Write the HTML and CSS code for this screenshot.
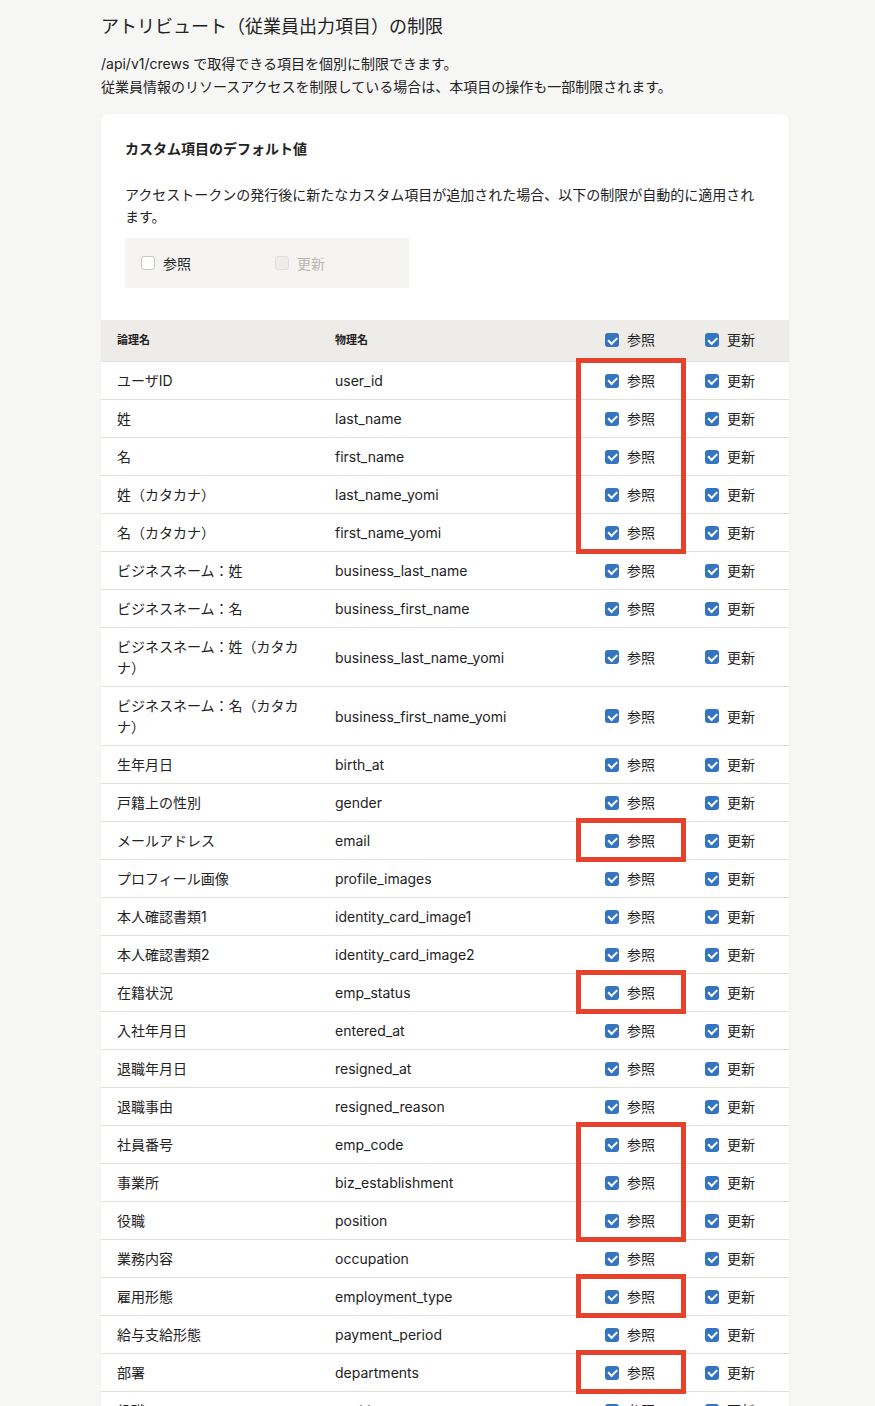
FILE: index.html
```html
<!DOCTYPE html>
<html lang="ja">

<head>
    <meta charset="UTF-8">
    <title>アトリビュートの制限</title>
    <link rel="stylesheet" href="styles.css">
</head>

<body>
    <div class="page">
        <h2 class="page-title">アトリビュート（従業員出力項目）の制限</h2>
        <p class="lead">/api/v1/crews で取得できる項目を個別に制限できます。<br>従業員情報のリソースアクセスを制限している場合は、本項目の操作も一部制限されます。</p>

        <div class="card">
            <div class="card-body">
                <h4>カスタム項目のデフォルト値</h4>
                <p>アクセストークンの発行後に新たなカスタム項目が追加された場合、以下の制限が自動的に適用されます。</p>
                <div class="defaults">
                    <label class="check"><span class="cb"></span>参照</label>
                    <label class="check disabled"><span class="cb off"></span>更新</label>
                </div>
            </div>

            <div class="attr-table">
                <div class="row head">
                    <div>論理名</div>
                    <div>物理名</div>
                    <div class="check"><span class="cb on"></span>参照</div>
                    <div class="check"><span class="cb on"></span>更新</div>
                </div>

                <!-- 赤枠: 参照列の注目行 -->
                <div class="mark">
                    <div class="row"><div>ユーザID</div><div>user_id</div><div class="check"><span class="cb on"></span>参照</div><div class="check"><span class="cb on"></span>更新</div></div>
                    <div class="row"><div>姓</div><div>last_name</div><div class="check"><span class="cb on"></span>参照</div><div class="check"><span class="cb on"></span>更新</div></div>
                    <div class="row"><div>名</div><div>first_name</div><div class="check"><span class="cb on"></span>参照</div><div class="check"><span class="cb on"></span>更新</div></div>
                    <div class="row"><div>姓（カタカナ）</div><div>last_name_yomi</div><div class="check"><span class="cb on"></span>参照</div><div class="check"><span class="cb on"></span>更新</div></div>
                    <div class="row"><div>名（カタカナ）</div><div>first_name_yomi</div><div class="check"><span class="cb on"></span>参照</div><div class="check"><span class="cb on"></span>更新</div></div>
                </div>
                <div class="row"><div>ビジネスネーム：姓</div><div>business_last_name</div><div class="check"><span class="cb on"></span>参照</div><div class="check"><span class="cb on"></span>更新</div></div>
                <div class="row"><div>ビジネスネーム：名</div><div>business_first_name</div><div class="check"><span class="cb on"></span>参照</div><div class="check"><span class="cb on"></span>更新</div></div>
                <div class="row"><div>ビジネスネーム：姓（カタカナ）</div><div>business_last_name_yomi</div><div class="check"><span class="cb on"></span>参照</div><div class="check"><span class="cb on"></span>更新</div></div>
                <div class="row"><div>ビジネスネーム：名（カタカナ）</div><div>business_first_name_yomi</div><div class="check"><span class="cb on"></span>参照</div><div class="check"><span class="cb on"></span>更新</div></div>
                <div class="row"><div>生年月日</div><div>birth_at</div><div class="check"><span class="cb on"></span>参照</div><div class="check"><span class="cb on"></span>更新</div></div>
                <div class="row"><div>戸籍上の性別</div><div>gender</div><div class="check"><span class="cb on"></span>参照</div><div class="check"><span class="cb on"></span>更新</div></div>
                <div class="mark">
                    <div class="row"><div>メールアドレス</div><div>email</div><div class="check"><span class="cb on"></span>参照</div><div class="check"><span class="cb on"></span>更新</div></div>
                </div>
                <div class="row"><div>プロフィール画像</div><div>profile_images</div><div class="check"><span class="cb on"></span>参照</div><div class="check"><span class="cb on"></span>更新</div></div>
                <div class="row"><div>本人確認書類1</div><div>identity_card_image1</div><div class="check"><span class="cb on"></span>参照</div><div class="check"><span class="cb on"></span>更新</div></div>
                <div class="row"><div>本人確認書類2</div><div>identity_card_image2</div><div class="check"><span class="cb on"></span>参照</div><div class="check"><span class="cb on"></span>更新</div></div>
                <div class="mark">
                    <div class="row"><div>在籍状況</div><div>emp_status</div><div class="check"><span class="cb on"></span>参照</div><div class="check"><span class="cb on"></span>更新</div></div>
                </div>
                <div class="row"><div>入社年月日</div><div>entered_at</div><div class="check"><span class="cb on"></span>参照</div><div class="check"><span class="cb on"></span>更新</div></div>
                <div class="row"><div>退職年月日</div><div>resigned_at</div><div class="check"><span class="cb on"></span>参照</div><div class="check"><span class="cb on"></span>更新</div></div>
                <div class="row"><div>退職事由</div><div>resigned_reason</div><div class="check"><span class="cb on"></span>参照</div><div class="check"><span class="cb on"></span>更新</div></div>
                <div class="mark">
                    <div class="row"><div>社員番号</div><div>emp_code</div><div class="check"><span class="cb on"></span>参照</div><div class="check"><span class="cb on"></span>更新</div></div>
                    <div class="row"><div>事業所</div><div>biz_establishment</div><div class="check"><span class="cb on"></span>参照</div><div class="check"><span class="cb on"></span>更新</div></div>
                    <div class="row"><div>役職</div><div>position</div><div class="check"><span class="cb on"></span>参照</div><div class="check"><span class="cb on"></span>更新</div></div>
                </div>
                <div class="row"><div>業務内容</div><div>occupation</div><div class="check"><span class="cb on"></span>参照</div><div class="check"><span class="cb on"></span>更新</div></div>
                <div class="mark">
                    <div class="row"><div>雇用形態</div><div>employment_type</div><div class="check"><span class="cb on"></span>参照</div><div class="check"><span class="cb on"></span>更新</div></div>
                </div>
                <div class="row"><div>給与支給形態</div><div>payment_period</div><div class="check"><span class="cb on"></span>参照</div><div class="check"><span class="cb on"></span>更新</div></div>
                <div class="mark">
                    <div class="row"><div>部署</div><div>departments</div><div class="check"><span class="cb on"></span>参照</div><div class="check"><span class="cb on"></span>更新</div></div>
                </div>
                <div class="row"><div>役職</div><div>positions</div><div class="check"><span class="cb on"></span>参照</div><div class="check"><span class="cb on"></span>更新</div></div>
            </div>
        </div>
    </div>
</body>

</html>
```

FILE: styles.css
```css
body{margin:0;background:#f6f6f4;color:#23221e;font-family:Inter,"Noto Sans CJK JP",sans-serif;}

.page{width:688px;padding:14px 0 40px 101px;}

.page-title{
    margin: 0;
    font-size: 18px;
    font-weight: normal;
    line-height: 26px;
}

.lead{
    margin: 12px 0 16px;
    font-size: 14px;
    line-height: 23px;
}

.card{
    background-color: #fff;
    border-radius: 6px;
    box-shadow: 0 0 1px rgba(0,0,0,.12);
}

.card-body{padding:25px 24px 32px;}
.card-body h4{margin:0;font-size:14px;line-height:20px;}
.card-body p{margin:25px 0 10px;font-size:14px;line-height:22px;}

.defaults{display:flex;width:268px;height:50px;padding-left:16px;align-items:center;background:#f5f4f2;}
.defaults .check{width:134px;}

/* チェックボックス */
.check{display:flex;align-items:center;gap:8px;font-size:14px;}
.check.disabled{color:#b8b7b2;}
.cb{position:relative;flex:none;width:14px;height:14px;box-sizing:border-box;border:1px solid #c9c8c3;border-radius:3px;background:#fff;}
.cb.off{background:#eeede9;border-color:#e0dfdb;}
.cb.on{border:none;background:#3474c1;}
.cb.on::after{
    content: "";
    position: absolute;
    left: 3px;
    top: 3.5px;
    width: 7px;
    height: 3.5px;
    border-left: 2px solid #fff;
    border-bottom: 2px solid #fff;
    transform: rotate(-45deg);
}

/* テーブル */
.row{display:grid;grid-template-columns:218px 261px 100px 109px;align-items:center;border-top:1px solid #e0dfdb;font-size:14px;line-height:21px;}
.row > div{padding:8px 16px;}
.row > .check{padding:8px 0 8px 25px;}
.row.head{border-top:none;background:#edece8;line-height:20px;padding:2px 0 3px;}
.row.head > div:nth-child(-n+2){font-size:11px;font-weight:bold;}

.mark{position:relative;}
.mark::after{
    content: "";
    position: absolute;
    left: 475px;
    top: -3px;
    bottom: -3px;
    width: 100px;
    border: 5px solid #e5412b;
}
```
